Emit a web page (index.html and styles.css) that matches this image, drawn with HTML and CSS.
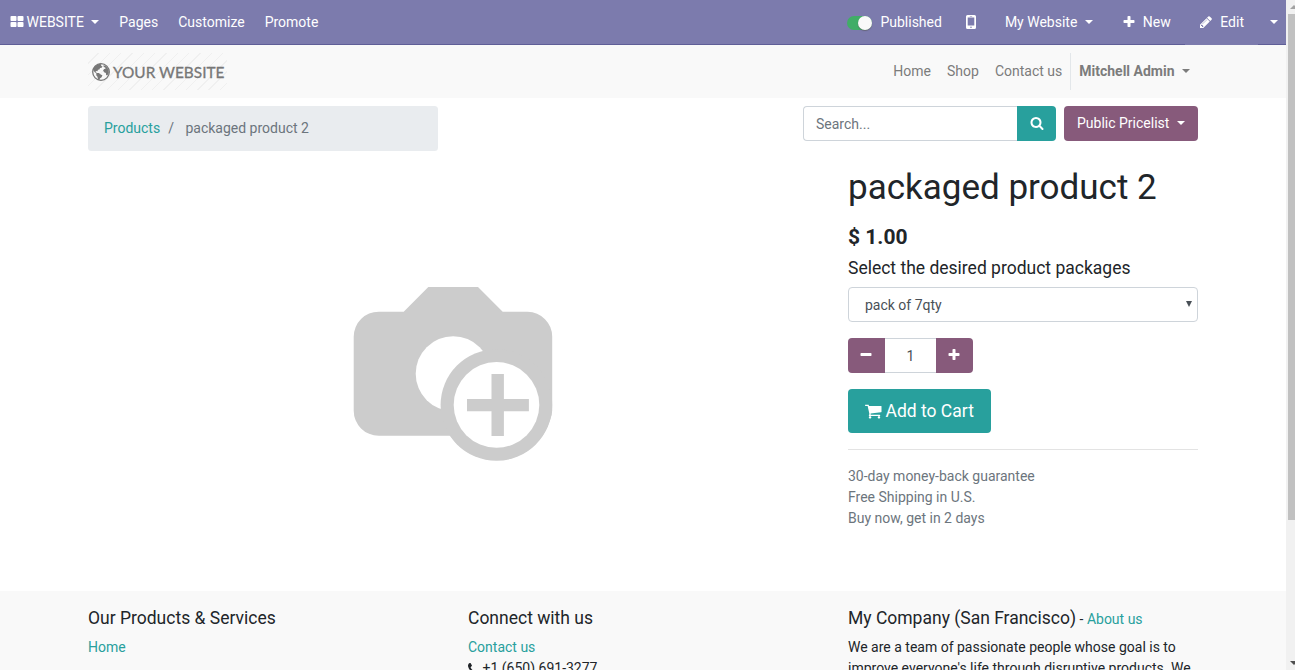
FILE: index.html
```
<!DOCTYPE html>
<html lang="en">
<head>
<meta charset="utf-8">
<title>packaged product 2 | My Website</title>
<link rel="stylesheet" href="styles.css">
</head>
<body>
<div class="viewport">
<div class="page">
  <nav class="topbar">
    <div class="menu">
      <a class="brand"><svg class="fa" viewBox="0 0 1792 1792"><path d="M832 1024v384q0 52-38 90t-90 38h-512q-52 0-90-38t-38-90v-384q0-52 38-90t90-38h512q52 0 90 38t38 90zm0-768v384q0 52-38 90t-90 38h-512q-52 0-90-38t-38-90v-384q0-52 38-90t90-38h512q52 0 90 38t38 90zm896 768v384q0 52-38 90t-90 38h-512q-52 0-90-38t-38-90v-384q0-52 38-90t90-38h512q52 0 90 38t38 90zm0-768v384q0 52-38 90t-90 38h-512q-52 0-90-38t-38-90v-384q0-52 38-90t90-38h512q52 0 90 38t38 90z"/></svg>WEBSITE<i class="caret"></i></a>
      <a>Pages</a><a>Customize</a><a>Promote</a>
    </div>
    <div class="tools">
      <a class="publish"><span class="switch"><i></i></span>Published</a>
      <a class="mobile"><svg width="10" height="14" viewBox="0 0 10 14"><path fill-rule="evenodd" d="M1.5 0h7A1.5 1.5 0 0 1 10 1.500v11A1.500 1.500 0 0 1 8.500 14h-7A1.500 1.500 0 0 1 0 12.500v-11A1.500 1.500 0 0 1 1.500 0zM1.700 2.600v8h6.600v-8zM3.800 1v.6h2.400V1zM5 11.500a.8.8 0 1 0 0 1.600.8.8 0 0 0 0-1.600z"/></svg></a>
      <a class="site">My Website<i class="caret"></i></a>
      <a class="new"><svg class="fa" viewBox="0 0 1792 1792"><path d="M1600 736v192q0 40-28 68t-68 28h-416v416q0 40-28 68t-68 28h-192q-40 0-68-28t-28-68v-416h-416q-40 0-68-28t-28-68v-192q0-40 28-68t68-28h416v-416q0-40 28-68t68-28h192q40 0 68 28t28 68v416h416q40 0 68 28t28 68z"/></svg>New</a>
      <a class="edit"><svg class="fa" viewBox="0 0 1792 1792"><path d="M491 1536l91-91-235-235-91 91v107h128v128h107zm523-928q0-22-22-22-10 0-17 7l-542 542q-7 7-7 17 0 22 22 22 10 0 17-7l542-542q7-7 7-17zm-54-192l416 416-832 832h-416v-416zm683 96q0 53-37 90l-166 166-416-416 166-165q36-38 90-38 53 0 91 38l235 234q37 39 37 91z"/></svg>Edit</a>
      <a class="more"><i class="caret"></i></a>
    </div>
  </nav>

  <header class="header">
    <div class="logo">
      <svg class="globe" viewBox="0 0 18 18"><circle cx="9" cy="9" r="8.300" fill="none" stroke="#777" stroke-width="1.300"/><path fill="#777" d="M1 6.500C2 3.500 4.500 1.300 8 .8l1.500 1-.5 1.200 1.500.2-.8 1.600-1.700.2-.6 1.500-1.500.3-.4 1.500-1.600-.2-.2 1.200 1.400.6 1.800.1 1.800 1.400 1.700.9-.8 2-1.500 1-.8 1.800-1.300-.3-.5-3-1.300-1.500.2-1.700L2.500 9zM11.500 2l3 1.500 2 3 .3 3.500-1.500 2.500-1.200-.4-.2-2-1.800-.8-1-1.800 1-1.600 1.500-.2-.4-1.300-1.500-.5z"/></svg>
      <span>YOUR WEBSITE</span>
    </div>
    <div class="links">
      <a>Home</a><a>Shop</a><a>Contact us</a><a class="user">Mitchell Admin<i class="caret"></i></a>
    </div>
  </header>

  <main>
    <div class="bar">
      <div class="breadcrumb"><a>Products</a><span class="slash">/</span><span>packaged product 2</span></div>
      <div class="actions">
        <div class="search"><div class="query">Search...</div><div class="go"><svg class="fa" viewBox="0 0 1792 1792"><path d="M1216 832q0-185-131.500-316.500t-316.500-131.500-316.500 131.500-131.500 316.500 131.500 316.500 316.500 131.500 316.500-131.500 131.500-316.500zm512 832q0 52-38 90t-90 38q-54 0-90-38l-343-342q-179 124-399 124-143 0-273.500-55.500t-225-150-150-225-55.500-273.500 55.500-273.500 150-225 225-150 273.500-55.500 273.500 55.500 225 150 150 225 55.500 273.500q0 220-124 399l343 343q37 37 37 90z"/></svg></div></div>
        <div class="pricelist">Public Pricelist<i class="caret"></i></div>
      </div>
    </div>
    <div class="product">
      <div class="photo">
        <svg width="200" height="175" viewBox="353 286 200 175">
          <path fill="#ccc" d="M378.700 311.700h25L428.300 287h49.700l24.700 24.700h25a25 25 0 0 1 24.500 24.800v74a25 25 0 0 1-2 9 56 56 0 0 1-100 16.200h-71.500a25 25 0 0 1-25-25v-74a25 25 0 0 1 25-25z"/>
          <circle cx="453.200" cy="373.700" r="37.500" fill="#fff"/>
          <circle cx="496.400" cy="405" r="55.800" fill="#ccc"/>
          <circle cx="496.500" cy="404.900" r="42.800" fill="#fff"/>
          <path fill="#ccc" d="M491.500 374h12.400v25h25v12.200h-25V436h-12.400v-24.800H467V399h24.500z"/>
        </svg>
      </div>
      <div class="details">
        <h1>packaged product 2</h1>
        <h4>$ 1.00</h4>
        <h5>Select the desired product packages</h5>
        <div class="select"><span>pack of 7qty</span><i></i></div>
        <div class="qty">
          <b><svg class="fa" viewBox="0 0 1792 1792"><path d="M1600 736v192q0 40-28 68t-68 28h-1216q-40 0-68-28t-28-68v-192q0-40 28-68t68-28h1216q40 0 68 28t28 68z"/></svg></b>
          <span>1</span>
          <b><svg class="fa" viewBox="0 0 1792 1792"><path d="M1600 736v192q0 40-28 68t-68 28h-416v416q0 40-28 68t-68 28h-192q-40 0-68-28t-28-68v-416h-416q-40 0-68-28t-28-68v-192q0-40 28-68t68-28h416v-416q0-40 28-68t68-28h192q40 0 68 28t28 68v416h416q40 0 68 28t28 68z"/></svg></b>
        </div>
        <div class="cart"><svg viewBox="64 0 1664 1792"><path d="M704 1536q0 52-38 90t-90 38-90-38-38-90 38-90 90-38 90 38 38 90zm896 0q0 52-38 90t-90 38-90-38-38-90 38-90 90-38 90 38 38 90zm128-1088v512q0 24-16.500 42.500t-40.500 21.500l-1044 122q13 60 13 70 0 16-24 64h920q26 0 45 19t19 45-19 45-45 19h-1024q-26 0-45-19t-19-45q0-11 8-31.500t16-36 21.500-40 15.500-29.500l-177-823h-204q-26 0-45-19t-19-45 19-45 45-19h256q16 0 28.500 6.500t19.500 15.500 13 24.500 8 26 5.500 29.500 4.500 26h1201q26 0 45 19t19 45z"/></svg>Add to Cart</div>
        <div class="terms">30-day money-back guarantee<br>Free Shipping in U.S.<br>Buy now, get in 2 days</div>
      </div>
    </div>
  </main>

  <footer>
    <div><h5>Our Products &amp; Services</h5><a>Home</a></div>
    <div><h5>Connect with us</h5><a>Contact us</a><br><svg class="phone" viewBox="192 128 1408 1536"><path d="M1600 1240q0 27-10 70.500t-21 68.500q-21 50-122 106-94 51-186 51-27 0-53-3.500t-57.500-12.500-47-14.500-55.500-20.500-49-18q-98-35-175-83-127-79-264-216t-216-264q-48-77-83-175-3-9-18-49t-20.500-55.500-14.500-47-12.500-57.500-3.500-53q0-92 51-186 56-101 106-122 25-11 68.500-21t70.500-10q14 0 21 3 18 6 53 76 11 19 30 54t35 63.500 31 53.500q3 4 17.500 25t21.500 35.500 7 28.500q0 20-28.500 50t-62 55-62 53-28.500 46q0 9 5 22.500t8.500 20.500 14 24 11.500 19q76 137 174 235t235 174q2 1 19 11.500t24 14 20.500 8.500 22.500 5q18 0 46-28.500t53-62 55-62 50-28.500q14 0 28.500 7t35.500 21.500 25 17.500q25 15 53.500 31t63.500 35 54 30q70 35 76 53 3 7 3 21z"/></svg>+1 (650) 691-3277</div>
    <div><h5>My Company (San Francisco)<small> - <a>About us</a></small></h5>We are a team of passionate people whose goal is to improve everyone's life through disruptive products. We</div>
  </footer>
</div>
<div class="scrollbar"><i class="up"></i><div class="thumb"></div><i class="down"></i></div>
</div>
</body>
</html>
```
FILE: styles.css
```
* { box-sizing: border-box; }
body { margin: 0; font: 14px/21px Roboto, sans-serif; color: #212529; background: #fff; overflow: hidden; }
h1, h4, h5 { margin: 0; font-weight: 400; }
svg { fill: currentColor; display: block; flex: none; }
.fa { width: 14px; height: 14px; }
.viewport { display: flex; height: 670px; width: 1295px; overflow: hidden; }
.page { width: 1286px; flex: none; display: flex; flex-direction: column; }
.caret { display: inline-block; border: 4px solid transparent; border-top-color: currentColor; border-bottom: 0; }

.topbar { height: 45px; flex: none; display: flex; justify-content: space-between; background: #7c7bad; color: #fff; box-shadow: inset 0 -1px #5f5e97; }
.menu, .tools { display: flex; }
.topbar a { display: flex; align-items: center; padding: 0 10px 1px; white-space: nowrap; }
.topbar .brand { padding-left: 9.500px; }
.brand .fa { margin-right: 3px; }
.brand .caret { margin-left: 7.500px; }
.topbar .publish { padding: 0; margin-right: 24px; }
.switch { width: 25px; height: 14px; border-radius: 7px; background: #40ad67; margin-right: 8px; display: flex; justify-content: flex-end; }
.switch i { width: 14px; height: 14px; border-radius: 7px; background: #f9f9f9; box-shadow: 0 1px 1px #5559; }
.topbar .mobile { padding: 0 0 1px; margin-right: 29px; }
.topbar .site { padding: 0 0 1px; margin-right: 28.500px; }
.site .caret { margin-left: 8px; }
.topbar .new { padding: 0 14.500px 1px 0; }
.new .fa, .edit .fa { margin-right: 7px; }
.topbar .edit { background: #7c7bad; padding: 0 14px 1px; }
.topbar .more { padding: 0 8px 1px 12px; }

.header { height: 53px; flex: none; background: #f9f9f9; padding: 8px 88px 0; display: flex; justify-content: space-between; color: #7c7c7c; }
.logo { width: 139px; height: 37px; display: flex; align-items: center; padding-left: 4px; font: 15.400px Lato, sans-serif; -webkit-text-stroke: .3px #777; color: #777; white-space: nowrap; background: repeating-linear-gradient(135deg, #f9f9f9 0 7px, #f0f0f0 7px 8px); }
.globe { width: 18px; height: 18px; margin-right: 3px; }
.links { display: flex; height: 37px; }
.links a { padding: 8px 8px 0; white-space: nowrap; }
.links .user { border-left: 1px solid #e3e7ea; font-weight: 700; }
.user .caret { margin-left: 7.500px; vertical-align: 3px; }

main { height: 493px; flex: none; padding: 8px 88px 0; }
.bar { display: flex; justify-content: space-between; align-items: flex-start; }
.breadcrumb { width: 350px; height: 45px; padding: 12px 16px; background: #e9ecef; border-radius: 3.500px; color: #6c757d; }
.breadcrumb a, footer a { color: #28a09d; }
.slash { padding: 0 11.500px 0 8px; }
.actions { display: flex; gap: 8px; }
.search { display: flex; width: 253px; height: 35px; }
.query { flex: 1; border: 1px solid #ced4da; border-right: 0; border-radius: 4px 0 0 4px; padding: 7px 12px; color: #6c757d; }
.go { width: 39px; background: #28a09d; color: #fff; border-radius: 0 4px 4px 0; display: flex; align-items: center; justify-content: center; padding-bottom: 1px; }
.pricelist { width: 134px; height: 35px; background: #875a7b; color: #fff; border-radius: 4px; padding: 7px 0 0 13px; white-space: nowrap; }
.pricelist .caret { margin-left: 8px; vertical-align: 3px; }

.product { display: flex; gap: 30px; padding-top: 15px; }
.photo { width: 730px; padding-top: 120px; display: flex; justify-content: center; }
.details { width: 350px; display: flex; flex-direction: column; padding-top: 1px; }
h1 { font-size: 35px; line-height: 42px; margin-bottom: 16px; }
h4 { font-size: 21px; line-height: 25px; font-weight: 700; margin-bottom: 8px; }
h5 { font-size: 17.500px; line-height: 21px; margin-bottom: 8px; white-space: nowrap; }
.select { height: 35px; border: 1px solid #ced4da; border-radius: 4px; padding: 2px 5px 0 16px; display: flex; justify-content: space-between; align-items: center; color: #495057; }
.select i { border: 3px solid transparent; border-top: 6px solid #495057; border-bottom: 0; margin-bottom: 4px; }
.qty { display: flex; height: 35px; width: 125px; margin: 16px 0; }
.qty b { width: 37px; background: #875a7b; color: #fff; display: flex; align-items: center; justify-content: center; border-radius: 4px 0 0 4px; padding: 0 1px 2px 0; }
.qty b:last-child { border-radius: 0 4px 4px 0; }
.qty span { flex: 1; text-align: center; border: solid #ced4da; border-width: 1px 0; padding-top: 7px; color: #495057; }
.cart { width: 143px; height: 44px; background: #28a09d; color: #fff; border-radius: 4px; font-size: 17.500px; display: flex; align-items: center; padding-left: 17px; white-space: nowrap; }
.cart svg { width: 16.500px; height: 18px; margin-right: 4px; }
.terms { border-top: 1px solid #e3e3e3; margin-top: 16px; padding-top: 16px; color: #6c757d; }

footer { flex: 1; background: #f9f9f9; padding: 17px 88px 0; display: grid; grid-template-columns: 350px 350px 350px; gap: 30px; }
footer h5 { height: 21px; margin-bottom: 8px; }
small { font-size: 14px; }
.phone { display: inline-block; width: 11px; height: 12px; margin-right: 3.500px; vertical-align: -2px; }

.scrollbar { width: 9px; background: #f1f1f1; padding-left: 2px; overflow: hidden; display: flex; flex-direction: column; align-items: flex-start; }
.scrollbar i { border: 4px solid transparent; flex: none; margin-left: 2px; }
.up { border-top: 0 !important; border-bottom-color: #a3a3a3 !important; margin-top: 5px; }
.thumb { width: 7px; height: 506px; background: #c1c1c1; margin-top: 5px; }
.down { border-bottom: 0 !important; border-top-color: #505050 !important; margin-top: auto; margin-bottom: 5px; }
```
